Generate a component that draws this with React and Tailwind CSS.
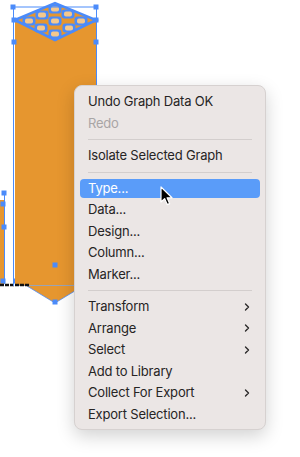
import { ChevronRight } from "lucide-react";

// Menu entries, top to bottom. "sep" draws a divider line.
const items = [
  { label: "Undo Graph Data OK" },
  { label: "Redo", disabled: true },
  { sep: true },
  { label: "Isolate Selected Graph" },
  { sep: true },
  { label: "Type...", active: true },
  { label: "Data..." },
  { label: "Design..." },
  { label: "Column..." },
  { label: "Marker..." },
  { sep: true },
  { label: "Transform", submenu: true },
  { label: "Arrange", submenu: true },
  { label: "Select", submenu: true },
  { label: "Add to Library" },
  { label: "Collect For Export", submenu: true },
  { label: "Export Selection..." },
];

const BLUE = "#4b8bfa";
const ORANGE = "#e6962f";

function Handle({ x, y, fill = BLUE }) {
  return <rect x={x - 2.5} y={y - 2.5} width="5" height="5" fill={fill} />;
}

// Graph column on the artboard, drawn as it appears while selected
function GraphCanvas() {
  const blobs = [
    [55, 9], [42, 15], [68, 14], [29, 21], [55, 21], [81, 21], [41, 28], [69, 28], [55, 34],
  ];
  return (
    <svg width="300" height="457" className="block">
      {/* small bar on the far left */}
      <rect x="0" y="200" width="4" height="85" fill={ORANGE} />
      <line x1="4.5" y1="193" x2="4.5" y2="284" stroke={BLUE} />
      <Handle x={4} y={193} />
      <Handle x={3} y={204} />
      <Handle x={4} y={227} />
      <Handle x={3} y={281} />
      <Handle x={16} y={281} />

      {/* column body with pointed bottom */}
      <polygon
        points="15,20 96,20 96,286 83,286 55,303 27,286 15,286"
        fill={ORANGE}
      />
      <line x1="15" y1="285.5" x2="96" y2="285.5" stroke="#9aa3b5" />
      <polyline points="27,286 55,303 83,286" fill="none" stroke={BLUE} strokeWidth="0.8" />

      {/* top face */}
      <polygon points="15,20 55,3 96,20 55,40" fill={ORANGE} stroke={BLUE} strokeWidth="2.5" />
      {blobs.map(([x, y], i) => (
        <g key={i}>
          <rect x={x - 6.5} y={y - 4.5} width="13" height="9" rx="3" fill={BLUE} />
          <rect x={x - 4} y={y - 2.5} width="8" height="5" rx="2" fill="#f4c88e" />
        </g>
      ))}
      <polyline points="15,20 55,40 96,20" fill="none" stroke={BLUE} strokeWidth="2" />

      {/* axis */}
      <line x1="0" y1="285" x2="30" y2="285" stroke="#111" strokeWidth="2.5" strokeDasharray="4 1" />

      {/* selection bounds */}
      <line x1="13.5" y1="7" x2="96.5" y2="7" stroke={BLUE} />
      <line x1="13.5" y1="7" x2="13.5" y2="286" stroke={BLUE} />
      <line x1="96.5" y1="7" x2="96.5" y2="286" stroke={BLUE} />
      <Handle x={13} y={7} />
      <Handle x={96} y={7} />
      <Handle x={14} y={20} />
      <Handle x={96} y={20} />
      <Handle x={14} y={42} />
      <Handle x={96} y={42} />
      <Handle x={55} y={265} />
      <Handle x={55} y={302} />
    </svg>
  );
}

function Cursor() {
  return (
    <svg width="14" height="21" viewBox="0 0 14 21" className="absolute left-[160px] top-[186px]">
      <path
        d="M1 1 L1 16 L4.6 12.6 L7.2 18.6 L9.6 17.6 L7.1 11.8 L12 11.8 Z"
        fill="#000"
        stroke="#fff"
        strokeWidth="1.2"
        strokeLinejoin="round"
      />
    </svg>
  );
}

export default function App() {
  return (
    <div className="relative h-[457px] w-[300px] overflow-hidden bg-white" style={{ fontFamily: "Inter, 'Liberation Sans', sans-serif" }}>
      <GraphCanvas />

      {/* Context menu */}
      <div className="absolute left-[74px] top-[85px] w-[192px] rounded-[8px] border border-[#d6d1d0] bg-[#ebe6e5] pt-[5px] pb-[4px] shadow-[0_6px_18px_rgba(0,0,0,0.18)]">
        {items.map((item, i) =>
          item.sep ? (
            <div key={i} className="flex h-[11px] items-center px-[13px]">
              <div className="h-px w-full bg-[#d3cecd]" />
            </div>
          ) : (
            <div key={i} className="flex h-[21.5px] items-center px-[5px]">
              <div
                className={
                  "flex h-[19.5px] w-full items-center justify-between rounded-[4px] pl-[8px] pr-[7px] text-[13px] tracking-[-0.2px] " +
                  (item.active ? "bg-[#5a9cf9] text-white" : item.disabled ? "text-[#a9a5a5]" : "text-[#262424]")
                }
              >
                <span>{item.label}</span>
                {item.submenu && <ChevronRight size={12} strokeWidth={2.8} className="text-[#2b2a2a]" />}
              </div>
            </div>
          )
        )}
      </div>

      <Cursor />
    </div>
  );
}
